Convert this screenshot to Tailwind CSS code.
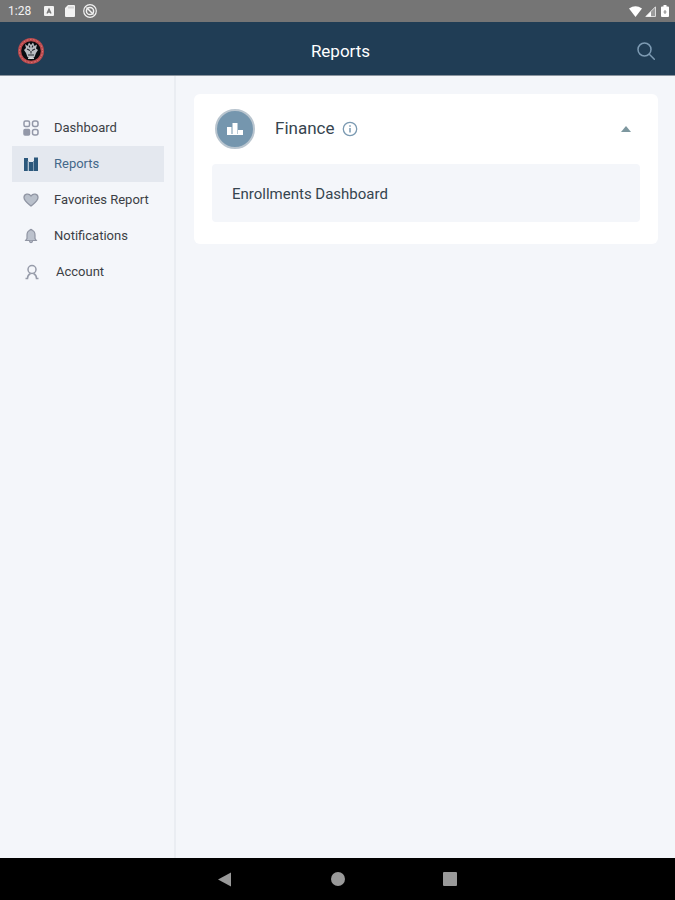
<!DOCTYPE html>
<html lang="en">

<head>
    <meta charset="UTF-8">
    <meta name="viewport" content="width=device-width, initial-scale=1.0">
    <title>Reports</title>
    <script src="https://cdn.jsdelivr.net/npm/@tailwindcss/browser@4"></script>
</head>

<body class="flex min-h-screen flex-col bg-[#f4f6fa] font-['Roboto',sans-serif] text-[#3c3f45]">
    <!-- Status bar -->
    <div class="flex h-[22px] items-center justify-between bg-[#757575] pl-2 pr-1 text-[#f2f2f2]">
        <div class="flex items-center">
            <span class="w-9 text-xs">1:28</span>
            <div class="flex items-center gap-2">
                <svg class="size-[10px]" viewBox="0 0 10 10" fill="none">
                    <rect width="10" height="10" rx="1" fill="#f2f2f2" />
                    <path d="M3 7.500 5 3l2 4.500M3.800 6h2.400" stroke="#757575" stroke-width="1.300" />
                </svg>
                <svg class="ml-[3px] h-3 w-[10px]" viewBox="0 0 10 12" fill="none">
                    <path d="M3 0h6a1 1 0 0 1 1 1v10a1 1 0 0 1-1 1H1a1 1 0 0 1-1-1V3z" fill="#f2f2f2" />
                    <path d="M4 1.500v2M6 1.500v2M8 1.500v2" stroke="#aaa" stroke-width=".8" />
                </svg>
                <svg class="size-[14px]" viewBox="0 0 14 14" fill="none" stroke="#f2f2f2">
                    <circle cx="7" cy="7" r="6.300" stroke-width="1.200" />
                    <circle cx="7" cy="7" r="3.600" stroke-width="1.500" />
                    <path d="m3.500 3.500 7 7" stroke-width="1.500" />
                </svg>
            </div>
        </div>
        <div class="flex items-center gap-[3px] pr-[2px]">
            <svg class="h-[11px] w-[13px]" viewBox="0 0 13 11">
                <path d="M0 2.500Q6.500-2.200 13 2.500L6.500 11z" fill="#fff" />
            </svg>
            <svg class="size-[11px]" viewBox="0 0 11 11" fill="none">
                <path d="M10.500.8v9.700H.8z" fill="#9a9a9a" stroke="#ddd" />
                <path d="M1 10.500 6 5.500v5z" fill="#fff" />
            </svg>
            <svg class="ml-[2px] h-3 w-2" viewBox="0 0 8 12">
                <path d="M2.500 0h3v1.500H7a1 1 0 0 1 1 1V11a1 1 0 0 1-1 1H1a1 1 0 0 1-1-1V2.500a1 1 0 0 1 1-1h1.500z" fill="#fff" />
                <path d="M4 5v4M2.500 7h3" stroke="#8a8a8a" />
            </svg>
        </div>
    </div>

    <!-- Header -->
    <header class="grid h-[54px] grid-cols-[1fr_auto_1fr] items-center border-b border-[#8b959f] bg-[#203d55] pl-[18px] pr-5 pt-1">
        <a href="#" aria-label="Home">
            <svg class="size-[26px]" viewBox="0 0 26 26">
                <circle cx="13" cy="13" r="13" fill="#b94a4d" />
                <circle cx="13" cy="13" r="11.500" fill="none" stroke="#e0797a" stroke-width="1" stroke-dasharray="1.500 1.800" />
                <circle cx="13" cy="13" r="9.800" fill="#080b10" />
                <path d="m7 6 2.500 2L11 4.500l2 2.500 2-2.500 1.500 3.500L19 6.500l-1 4 2 1.500-2 3-1.500 4L13 21l-3.500-2L8 15l-2-3 2-2z" fill="#b9bcc2" />
                <path d="m9 11 3 1.500M17 11l-3 1.500M10 17h6M13 13v2.500M11 7.500l1 2M15 7.500l-1 2" stroke="#22262d" stroke-width="1.100" />
                <path d="M10 20.300h6" stroke="#e5e5e5" stroke-width="1.200" />
            </svg>
        </a>
        <h1 class="pl-2 text-[17px] leading-6 text-white">Reports</h1>
        <button type="button" aria-label="Search" class="justify-self-end">
            <svg class="size-[18px]" viewBox="0 0 18 18" fill="none" stroke="#7d9bb3" stroke-width="1.500" stroke-linecap="round">
                <circle cx="7.500" cy="7.500" r="6.500" />
                <path d="m12.300 12.300 5 4.900" />
            </svg>
        </button>
    </header>

    <div class="flex flex-1">
        <!-- Sidebar -->
        <nav class="w-44 shrink-0 border-r-2 border-[#eaedf2] pl-3 pr-[10px] pt-[34px] text-[13px]">
            <a href="#" class="flex h-9 items-center gap-[15px] pl-[11px]">
                <svg class="size-4" viewBox="0 0 16 16" fill="none" stroke="#9398a8" stroke-width="1.500">
                    <rect x="1" y="1" width="5.500" height="5.500" rx="1.500" />
                    <rect x="9.500" y="1" width="5.500" height="5.500" rx="2" />
                    <rect x="1" y="9.500" width="5.500" height="5.500" rx="1" fill="#9398a8" />
                    <rect x="9.500" y="9.500" width="5.500" height="5.500" rx="2" />
                </svg>
                Dashboard
            </a>
            <a href="#" aria-current="page" class="flex h-9 items-center gap-[15px] bg-[#e4e8ef] pl-[11px] text-[#44698a]">
                <svg class="size-4" viewBox="0 0 16 16">
                    <path d="M1 2h4v13H1zM6 6h4v9H6zM11 1.500h4V15h-4z" fill="#2c587c" />
                    <path d="M5 5v10M10.500 5v10" stroke="#7f9bb2" />
                </svg>
                Reports
            </a>
            <a href="#" class="flex h-9 items-center gap-[15px] pl-[11px]">
                <svg class="size-4" viewBox="0 0 16 16" fill="#b9c0cb" stroke="#9095a3" stroke-width="1.300">
                    <path d="M8 14C5.500 11.800 1 9 1 5.500 1 2 5.800.8 8 4c2.200-3.200 7-2 7 1.500C15 9 10.500 11.800 8 14z" />
                </svg>
                Favorites Report
            </a>
            <a href="#" class="flex h-9 items-center gap-[15px] pl-[11px]">
                <svg class="size-4" viewBox="0 0 16 16" fill="#bcc2cd" stroke="#9095a3" stroke-width="1.200">
                    <path d="M6.800 2.500a1.200 1.200 0 0 1 2.400 0C11.500 3 12 5 12 7v3.500l1.300 2H2.700l1.300-2V7c0-2 .5-4 2.800-4.500z" />
                    <path d="M6.500 12.800a1.500 1.800 0 0 0 3 0" />
                </svg>
                Notifications
            </a>
            <a href="#" class="flex h-9 items-center gap-4 pl-3">
                <svg class="size-4" viewBox="0 0 16 16" fill="none" stroke="#969ba9" stroke-width="1.500">
                    <circle cx="8" cy="5.500" r="4" />
                    <path d="M1.500 14.500h2c0-2.500 1-4 3-5M14.500 14.500h-2c0-2.500-1-4-3-5" />
                </svg>
                Account
            </a>
        </nav>

        <!-- Content -->
        <main class="min-w-0 flex-1 p-[18px] pr-[17px]">
            <section class="rounded-md bg-white px-[18px] pb-[22px] text-[#36454f]">
                <div class="flex h-[70px] items-center pl-[3px] pr-2">
                    <div class="grid size-10 place-items-center rounded-full border-2 border-[#b9c5cf] bg-[#7596ae]">
                        <svg class="h-3 w-4" viewBox="0 0 16 12" fill="#fff">
                            <path d="M0 4h4.500v8H0zM5.500 0h5v12h-5zM11 7h5v5h-5z" />
                            <path d="M0 11h16v1H0z" />
                        </svg>
                    </div>
                    <h2 class="ml-5 text-[17px]">Finance</h2>
                    <button type="button" aria-label="About Finance" class="ml-2">
                        <svg class="size-4" viewBox="0 0 16 16" fill="none" stroke="#7a99b1" stroke-width="1.300">
                            <circle cx="8" cy="8" r="6.700" />
                            <path d="M8 7v4.500M8 4.300v1.500" stroke-width="1.500" />
                        </svg>
                    </button>
                    <button type="button" aria-label="Collapse Finance" class="ml-auto p-[1px]">
                        <svg class="h-[6px] w-[10px]" viewBox="0 0 10 6">
                            <path d="M0 6 5 0l5 6z" fill="#7d979f" />
                        </svg>
                    </button>
                </div>
                <a href="#" class="flex h-[58px] items-center rounded bg-[#f4f6fa] px-5 pt-[2px] text-[15px]">Enrollments Dashboard</a>
            </section>
        </main>
    </div>

    <!-- System navigation -->
    <footer class="flex h-[42px] items-center justify-center gap-[98px] bg-black">
        <button type="button" aria-label="Back">
            <svg class="size-[15px]" viewBox="0 0 15 15"><path d="M0 7.500 13 .5v14z" fill="#999" /></svg>
        </button>
        <button type="button" aria-label="Home" class="size-[14px] rounded-full bg-[#999]"></button>
        <button type="button" aria-label="Recent apps" class="size-[14px] rounded-[1px] bg-[#999]"></button>
    </footer>
</body>

</html>
